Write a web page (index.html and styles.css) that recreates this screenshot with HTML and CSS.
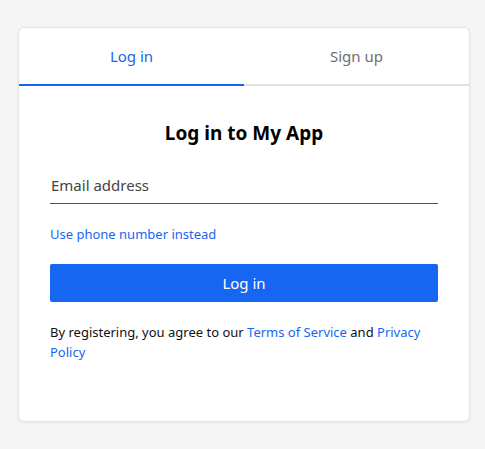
FILE: index.html
```html
<!DOCTYPE html>
<html lang="en">
<head>
<meta charset="utf-8">
<title>Log in</title>
<link rel="stylesheet" href="styles.css">
</head>
<body>
<div class="card">
  <div class="tabs">
    <div class="tab active">Log in</div>
    <div class="tab">Sign up</div>
  </div>
  <div class="content">
    <h1 class="title">Log in to My App</h1>
    <div class="field">Email address</div>
    <a class="alt-link" href="#">Use phone number instead</a>
    <button class="submit">Log in</button>
    <p class="terms">By registering, you agree to our <a href="#">Terms of Service</a> and <a href="#">Privacy Policy</a></p>
  </div>
</div>
</body>
</html>
```
FILE: styles.css
```css
html, body {
  margin: 0;
  padding: 0;
}
body {
  background: #f5f5f5;
  font-family: "Noto Sans", "Open Sans", sans-serif;
  padding: 27px 0 0 18px;
  height: 449px;
  box-sizing: border-box;
}
.card {
  width: 452px;
  height: 395px;
  box-sizing: border-box;
  background: #fff;
  border: 1px solid #e3e3e3;
  border-radius: 6px;
  box-shadow: 0 1px 4px rgba(0,0,0,0.06);
  overflow: hidden;
}
.tabs {
  display: flex;
  border-bottom: 2px solid #e2e2e2;
}
.tab {
  flex: 1;
  height: 56px;
  display: flex;
  align-items: center;
  justify-content: center;
  font-size: 15px;
  color: #6f6f6f;
  margin-bottom: -2px;
  border-bottom: 2px solid transparent;
}
.tab.active {
  color: #1766f2;
  border-bottom-color: #1766f2;
}
.content {
  padding: 34px 31px 0 31px;
  display: flex;
  flex-direction: column;
}
.title {
  margin: 0;
  font-size: 19px;
  line-height: 26px;
  font-weight: 700;
  text-align: center;
  color: #000;
}
.field {
  margin-top: 21px;
  height: 36px;
  display: flex;
  align-items: center;
  font-size: 15px;
  color: #444;
  border-bottom: 1px solid #555;
  padding-left: 1px;
}
.alt-link {
  margin-top: 21px;
  font-size: 13px;
  line-height: 18px;
  color: #1766f2;
  text-decoration: none;
  align-self: flex-start;
}
.submit {
  margin-top: 21px;
  height: 38px;
  border: none;
  border-radius: 2px;
  background: #1766f2;
  color: #fff;
  font-family: inherit;
  font-size: 15px;
}
.terms {
  margin: 20px 0 0 0;
  font-size: 13px;
  line-height: 20px;
  color: #111;
}
.terms a {
  color: #1766f2;
  text-decoration: none;
}
```
